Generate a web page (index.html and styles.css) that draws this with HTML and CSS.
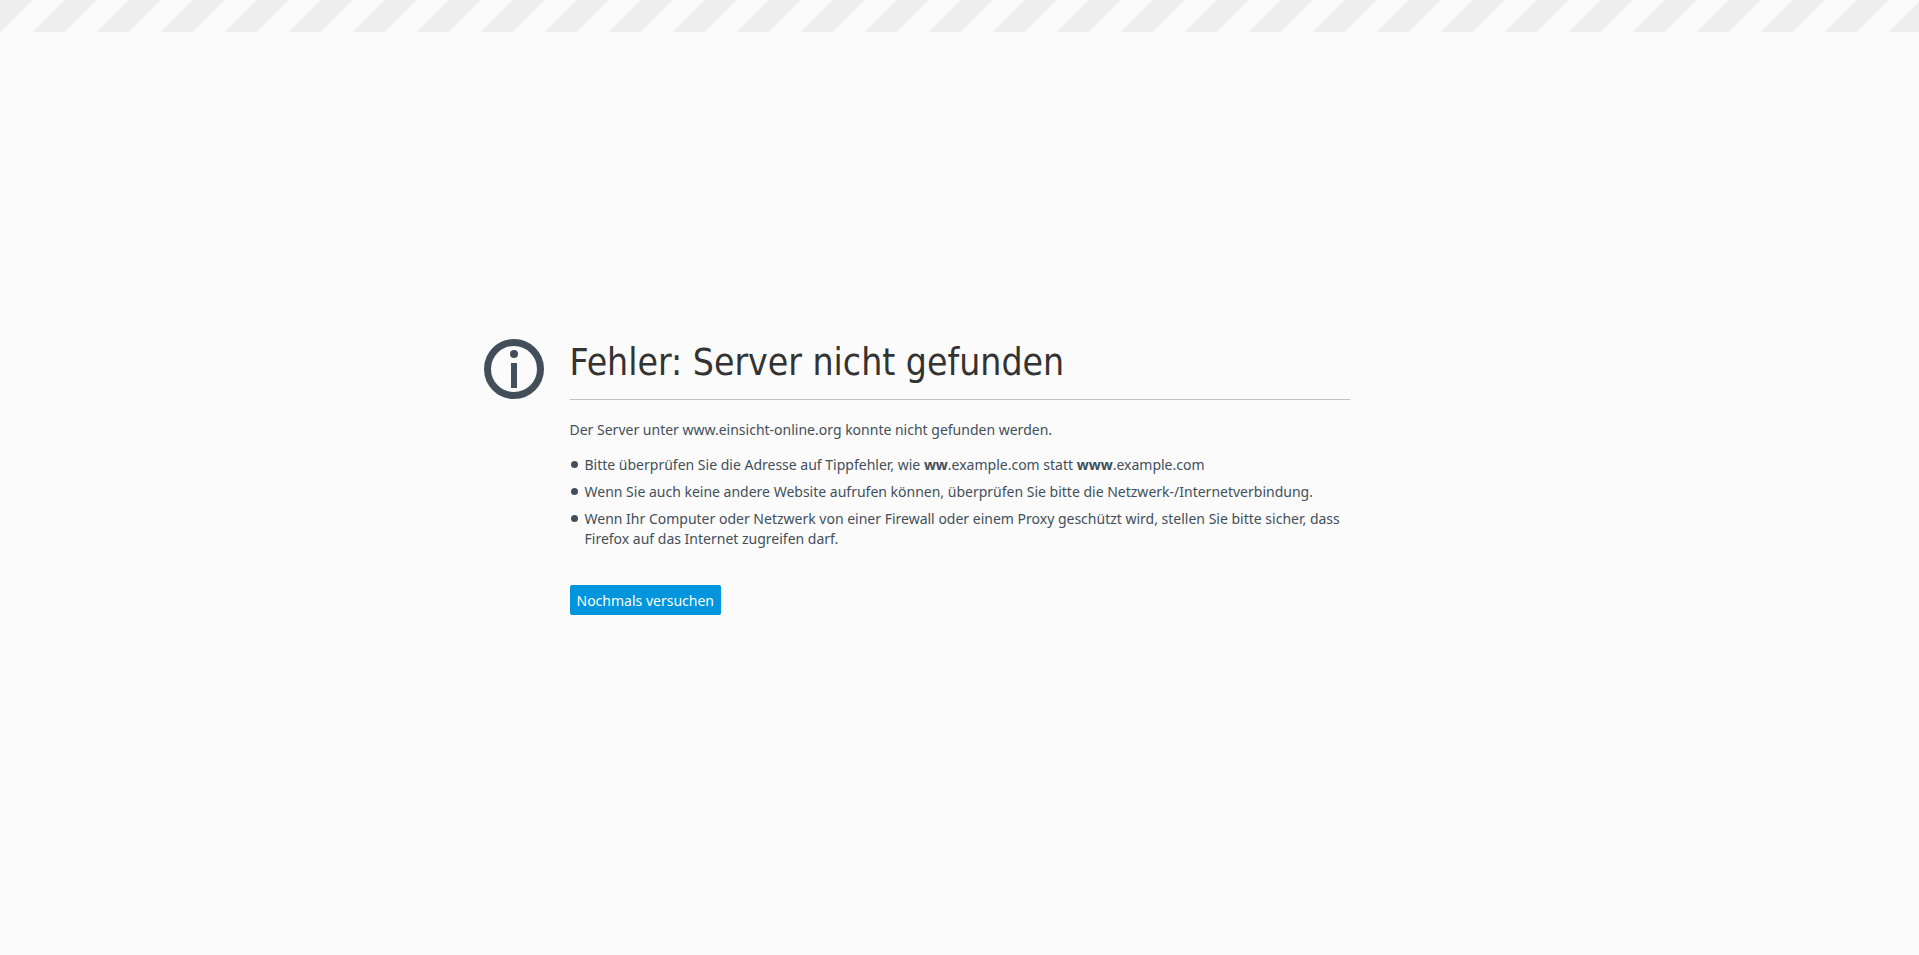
FILE: index.html
```html
<!DOCTYPE html>
<html lang="de">
<head>
    <meta charset="utf-8">
    <title>Fehler: Server nicht gefunden</title>
    <link rel="stylesheet" href="styles.css">
</head>
<body>
    <main class="container">
        <svg class="icon" viewBox="0 0 60 60" aria-hidden="true">
            <circle cx="30" cy="30" r="26.5" fill="none" stroke="#424f5a" stroke-width="7"/>
            <circle cx="30" cy="15" r="4" fill="#424f5a"/>
            <rect x="27" y="24" width="6" height="25" fill="#424f5a"/>
        </svg>
        <div class="text">
            <h1 class="title">Fehler: Server nicht gefunden</h1>
            <p class="short-desc">Der Server unter www.einsicht-online.org konnte nicht gefunden werden.</p>
            <ul class="long-desc">
                <li>Bitte überprüfen Sie die Adresse auf Tippfehler, wie <strong>ww</strong>.example.com statt <strong>www</strong>.example.com</li>
                <li>Wenn Sie auch keine andere Website aufrufen können, überprüfen Sie bitte die Netzwerk-/Internetverbindung.</li>
                <li>Wenn Ihr Computer oder Netzwerk von einer Firewall oder einem Proxy geschützt wird, stellen Sie bitte sicher, dass Firefox auf das Internet zugreifen darf.</li>
            </ul>
            <button class="retry" type="button">Nochmals versuchen</button>
        </div>
    </main>
</body>
</html>
```
FILE: styles.css
```css
* { box-sizing: border-box; }
body {
    display: flex;
    align-items: center;
    justify-content: center;
    min-height: 100vh;
    margin: 0;
    padding: 32px 48px 33px;
    color: #424f5a;
    background-color: #fbfbfb;
    background-image: linear-gradient(-45deg, #eee 33%, #fbfbfb 33%, #fbfbfb 66%, #eee 66%);
    background-size: 64px 32px;
    background-repeat: repeat-x;
    font: 14px/20px "Noto Sans", Tahoma, sans-serif;
}
.container {
    display: flex;
    gap: 26px;
    width: 100%;
    max-width: 952px;
    padding-right: 86px;
}
.icon { flex: none; width: 60px; height: 60px; }
.text { flex: 1; }
.title {
    margin: 0 0 20px;
    padding-bottom: 12px;
    border-bottom: 1px solid #c1c1c1;
    color: #333;
    font-family: "DejaVu Sans Condensed", Tahoma, sans-serif;
    font-size: 37px;
    font-weight: normal;
    line-height: 48px;
}
.short-desc { margin: 0 0 15px; }
.long-desc {
    margin: 0 0 36px;
    padding-left: 15px;
    list-style: none;
}
.long-desc li { margin-bottom: 7px; }
.long-desc li:last-child { margin-bottom: 0; }
.long-desc li::before {
    content: "";
    display: inline-block;
    width: 7px;
    height: 7px;
    margin: 0 7px 3px -14px;
    border-radius: 50%;
    background: #424f5a;
    vertical-align: middle;
}
.retry {
    display: block;
    height: 30px;
    padding: 1px 7px 0;
    border: 0;
    border-radius: 2px;
    color: #fff;
    background: #0095dd;
    font: inherit;
}
```
